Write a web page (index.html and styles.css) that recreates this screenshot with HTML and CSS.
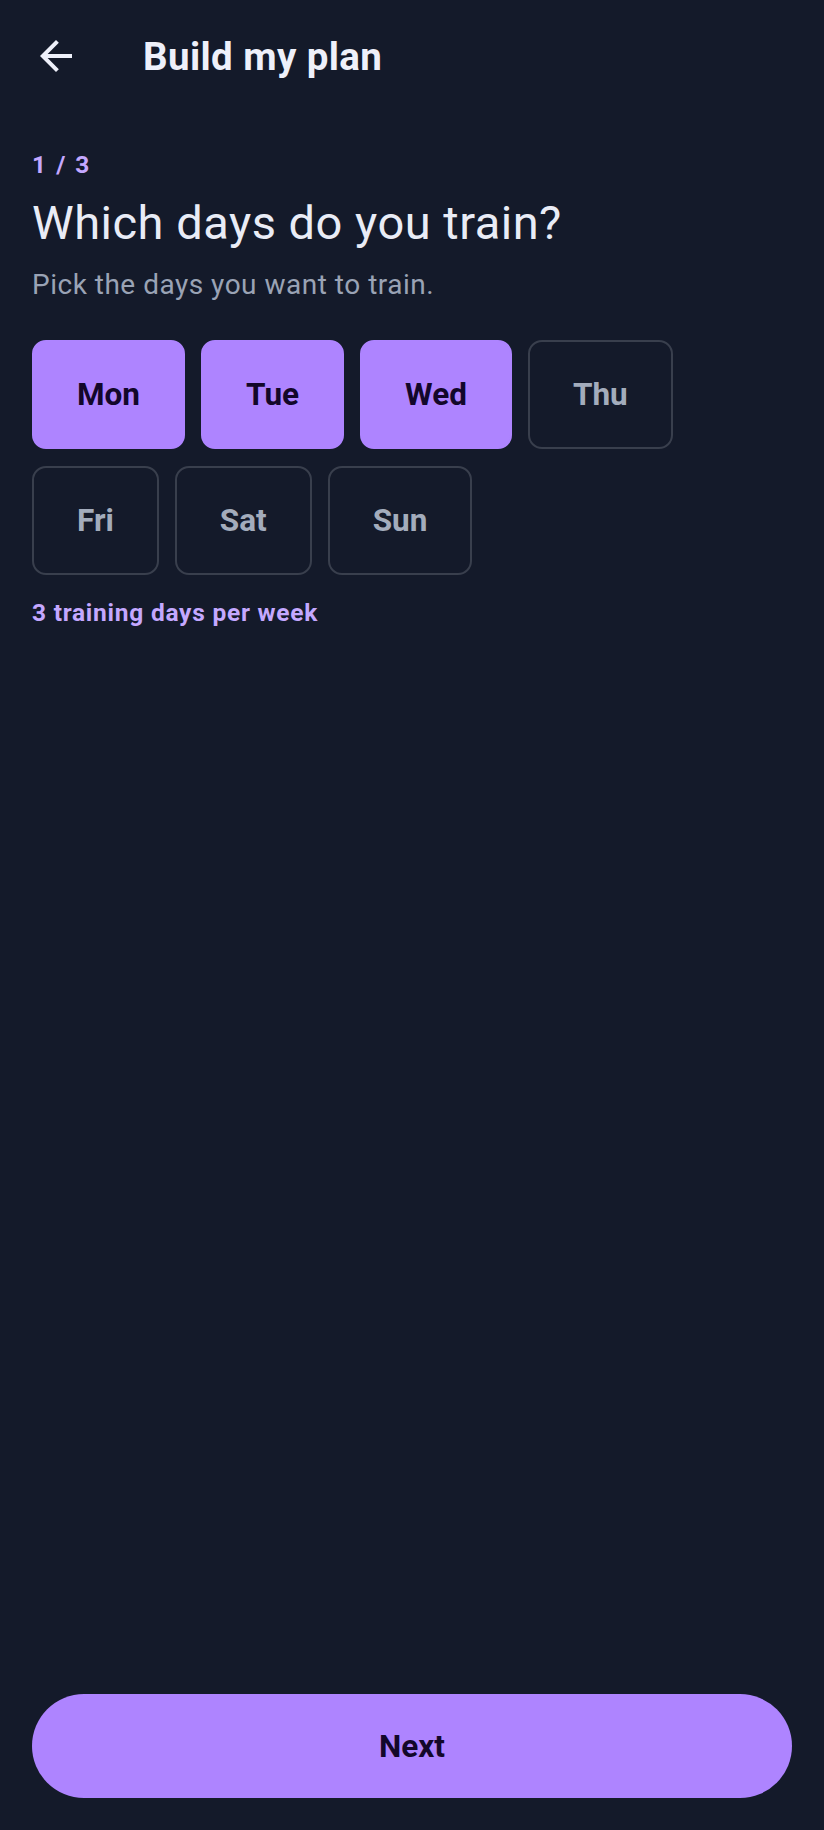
FILE: index.html
```html
<!DOCTYPE html>
<html lang="en">
<head>
  <meta charset="UTF-8">
  <meta name="viewport" content="width=device-width, initial-scale=1">
  <title>Build my plan</title>
  <link rel="stylesheet" href="styles.css">
</head>
<body>
  <div class="screen">
    <header class="app-bar">
      <button class="back-btn" aria-label="Back">
        <svg viewBox="0 0 24 24" width="48" height="48">
          <path fill="currentColor" d="M20 11H7.83l5.59-5.59L12 4l-8 8 8 8 1.41-1.41L7.83 13H20v-2z"/>
        </svg>
      </button>
      <h1 class="app-title">Build my plan</h1>
    </header>

    <main class="content">
      <div class="step">1 / 3</div>
      <h2 class="question">Which days do you train?</h2>
      <p class="hint">Pick the days you want to train.</p>

      <div class="days" id="days">
        <!-- chips are added by the script -->
      </div>

      <div class="summary" id="summary">3 training days per week</div>
    </main>

    <button class="next-btn">Next</button>
  </div>

  <script>
    const days = ["Mon", "Tue", "Wed", "Thu", "Fri", "Sat", "Sun"];
    const selected = new Set(["Mon", "Tue", "Wed"]);
    const daysBox = document.getElementById('days');
    const summary = document.getElementById('summary');

    function updateSummary() {
      const n = selected.size;
      summary.textContent = `${n} training ${n === 1 ? 'day' : 'days'} per week`;
    }

    days.forEach(day => {
      const chip = document.createElement('button');
      chip.className = 'day-chip';
      chip.textContent = day;
      if (selected.has(day)) chip.classList.add('selected');

      chip.addEventListener('click', () => {
        if (selected.has(day)) {
          selected.delete(day);
          chip.classList.remove('selected');
        } else {
          selected.add(day);
          chip.classList.add('selected');
        }
        updateSummary();
      });

      daysBox.appendChild(chip);
    });

    updateSummary();
  </script>
</body>
</html>
```

FILE: styles.css
```css
body {
  margin: 0;
  background-color: #141a2a;
  font-family: Roboto, "Noto Sans", sans-serif;
  color: #eceff8;
}

.screen {
  min-height: 100vh;
  display: flex;
  flex-direction: column;
  box-sizing: border-box;
  padding-bottom: 32px;
}

.app-bar {
  height: 112px;
  display: flex;
  align-items: center;
  padding-left: 32px;
}

.back-btn {
  width: 48px;
  height: 48px;
  padding: 0;
  border: none;
  background: transparent;
  color: #eef0fa;
  display: flex;
}

.app-title {
  margin: 0 0 0 63px;
  font-size: 38.5px;
  font-weight: 700;
  letter-spacing: 0.4px;
  color: #eef0fa;
}

.content {
  padding: 0 32px;
}

.step {
  margin-top: 37px;
  font-size: 24.5px;
  line-height: 32px;
  font-weight: 700;
  letter-spacing: 2px;
  color: #c4a8ff;
}

.question {
  margin: 14px 0 0;
  font-size: 47px;
  line-height: 56px;
  font-weight: 400;
  letter-spacing: 0.5px;
  color: #e9ecf6;
}

.hint {
  margin: 15.5px 0 0;
  font-size: 28px;
  line-height: 36px;
  letter-spacing: 0.5px;
  color: #9aa3b5;
}

.days {
  margin-top: 37px;
  display: flex;
  flex-wrap: wrap;
  gap: 17.5px 16px;
  max-width: 660px;
}

.day-chip {
  height: 109px;
  padding: 0 43px;
  border: 2px solid #393f4d;
  border-radius: 14px;
  background: transparent;
  font-family: Roboto, "Noto Sans", sans-serif;
  font-size: 31.5px;
  font-weight: 700;
  color: #a3acbc;
  cursor: pointer;
}

.day-chip.selected {
  background-color: #ae84ff;
  border-color: #ae84ff;
  color: #13072a;
}

.summary {
  margin-top: 21.5px;
  font-size: 24.5px;
  line-height: 32px;
  font-weight: 700;
  letter-spacing: 0.75px;
  color: #c4a8ff;
}

.next-btn {
  margin: auto 32px 0;
  height: 104px;
  border: none;
  border-radius: 52px;
  background-color: #ae84ff;
  font-family: Roboto, "Noto Sans", sans-serif;
  font-size: 31.5px;
  font-weight: 700;
  color: #13072a;
  cursor: pointer;
}
```
